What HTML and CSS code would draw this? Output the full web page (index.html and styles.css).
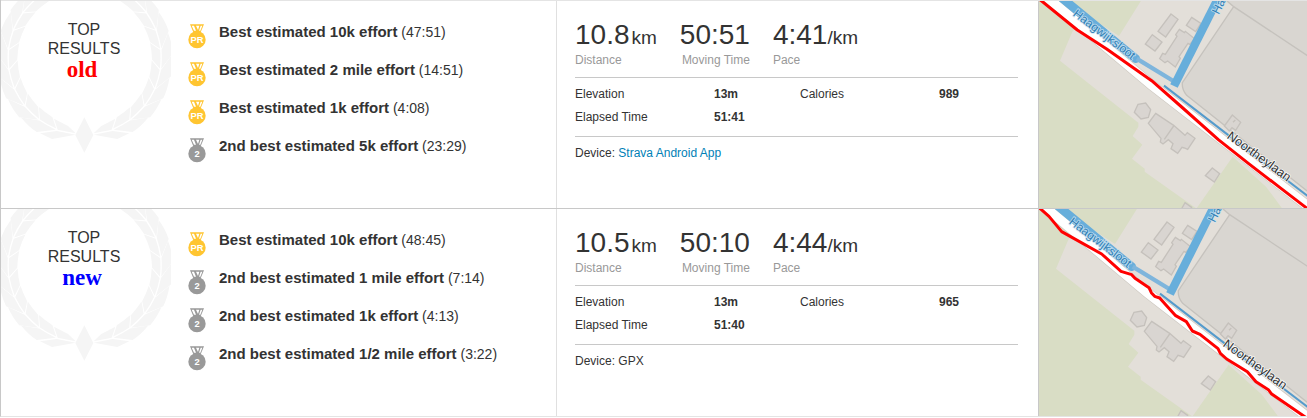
FILE: index.html
```
<!DOCTYPE html>
<html lang="en">
<head>
<meta charset="utf-8">
<title>Activity comparison</title>
<link rel="stylesheet" href="styles.css">
</head>
<body>
<svg class="sprites" aria-hidden="true">
  <defs>
    <path id="leaf" d="M232 0Q231 -28 225 -56L237 -110Q254 -80 260 -50ZM228 0Q227 -28 221 -55L188 -72Q196 -50 201 -23Z"/>
    <g id="branch">
      <use href="#leaf" transform="rotate(-52)"/>
      <use href="#leaf" transform="rotate(-37)"/>
      <use href="#leaf" transform="rotate(-22)"/>
      <use href="#leaf" transform="rotate(-7)"/>
      <use href="#leaf" transform="rotate(8)"/>
      <use href="#leaf" transform="rotate(23)"/>
      <use href="#leaf" transform="rotate(38)"/>
      <use href="#leaf" transform="rotate(53)"/>
      <use href="#leaf" transform="rotate(68)"/>
      <path d="M27 230L84 219L134 226L98 243ZM27 226L50 204L92 182L81 215Z"/>
    </g>
    <symbol id="wreath" viewBox="3 3 510 456">
      <g fill="#f5f5f5">
        <use href="#branch" transform="translate(254 174)"/>
        <use href="#branch" transform="translate(254 174) scale(-1 1)"/>
        <path d="M253 352L280 405L253 458L226 405Z"/>
      </g>
    </symbol>
    <symbol id="medal" viewBox="24 71 54 75">
      <path fill="currentColor" d="M30 72H72L61 98H41Z"/>
      <circle cx="51" cy="118" r="26" fill="currentColor"/>
      <path fill="#fff" d="M35 76h7l6 15h-6zM48 76h10l-4 13zM62 76h5l-6 15h-4z"/>
    </symbol>
    <g id="terrain">
      <rect x="-20" y="-20" width="900" height="680" fill="#e3dfd9"/>
      <path fill="#d9ddc5" d="M-20 -20H332L252 108L155 45L112 95L75 182L310 368V380L293 408L322 434L291 476L329 506V515L485 626H-20ZM593 470L693 560L742 626H484Z"/>
      <path fill="#d9d6d1" stroke="#c5c2bd" stroke-width="4" d="M575 2L596 20L442 248Q440 268 455 286L840 592V-10H580ZM596 20L840 182"/>
      <g fill="#d9d5d1" stroke="#c5c1bc" stroke-width="4">
        <path d="M408 42L429 58L392 111L369 94ZM470 52L498 70L482 95L454 76ZM352 104L381 126L360 153L331 132ZM433 88L448 98L451 94L480 117L464 133L459 130L432 170L436 175L421 201L398 183L390 188L374 176L383 160L391 163L426 109L422 104ZM309 313L332 309L347 329L340 352L318 357L298 337ZM362 340L416 376L450 406L457 398L480 415L458 448L448 444L441 442L428 460L408 446L414 431L400 419L384 432L376 426L378 415L340 370ZM416 378L388 418M592 345L617 367L602 391L591 383L583 393L568 378ZM594 367L601 360M532 504L554 521L538 546L511 527ZM450 608L470 622L465 640L440 626Z"/>
      </g>
      <path d="M10 -30L350 255L840 635" fill="none" stroke="#cfcac3" stroke-width="32"/>
      <path d="M10 -30L350 255L840 635" fill="none" stroke="#fff" stroke-width="28"/>
      <path d="M70 -15L302 176" fill="none" stroke="#67aedb" stroke-width="26" stroke-linecap="round"/>
      <path d="M305 176L420 246" fill="none" stroke="#7eb5dc" stroke-width="13"/>
      <path d="M562 -30L417 258" fill="none" stroke="#67aedb" stroke-width="25"/>
      <path d="M387 257L578 404L840 605" fill="none" stroke="#559bcc" stroke-width="6"/>
      <g class="map-label map-label-water">
        <text transform="translate(112 46) rotate(37)">Haagwijksloot</text>
        <text transform="translate(551 45) rotate(-63)">Haagwijksloot</text>
      </g>
      <text class="map-label" transform="translate(574 413) rotate(36)">Noortheylaan</text>
    </g>
  </defs>
</svg>

<main class="activities">
  <section class="activity">
    <div class="results">
      <div class="award">
        <svg class="wreath" aria-hidden="true"><use href="#wreath"/></svg>
        <h2 class="award-title">Top<br>Results<span class="tag tag-old">old</span></h2>
      </div>
      <ul class="efforts">
        <li><svg class="medal gold" viewBox="0 0 54 75"><use href="#medal" width="54" height="75"/><text x="27" y="57">PR</text></svg><span><strong>Best estimated 10k effort</strong> (47:51)</span></li>
        <li><svg class="medal gold" viewBox="0 0 54 75"><use href="#medal" width="54" height="75"/><text x="27" y="57">PR</text></svg><span><strong>Best estimated 2 mile effort</strong> (14:51)</span></li>
        <li><svg class="medal gold" viewBox="0 0 54 75"><use href="#medal" width="54" height="75"/><text x="27" y="57">PR</text></svg><span><strong>Best estimated 1k effort</strong> (4:08)</span></li>
        <li><svg class="medal silver" viewBox="0 0 54 75"><use href="#medal" width="54" height="75"/><text x="27" y="57">2</text></svg><span><strong>2nd best estimated 5k effort</strong> (23:29)</span></li>
      </ul>
    </div>
    <div class="stats">
      <dl class="totals">
        <div><dd>10.8<small class="unit-gap">km</small></dd><dt>Distance</dt></div>
        <div class="moving"><dd>50:51</dd><dt>Moving Time</dt></div>
        <div><dd>4:41<small>/km</small></dd><dt>Pace</dt></div>
      </dl>
      <table class="details">
        <tr><th scope="row">Elevation</th><td>13m</td><th scope="row">Calories</th><td>989</td></tr>
        <tr><th scope="row">Elapsed Time</th><td>51:41</td><td></td><td></td></tr>
      </table>
      <p class="device">Device: <a href="#">Strava Android App</a></p>
    </div>
    <div class="map">
      <svg viewBox="12 3 804 621" preserveAspectRatio="xMinYMin slice" role="img" aria-label="Route map">
        <use href="#terrain"/>
        <path class="route" d="M10 -5L127 90L215 147L350 242L440 321L550 419L640 490L735 563L820 628"/>
      </svg>
    </div>
  </section>

  <section class="activity">
    <div class="results">
      <div class="award">
        <svg class="wreath" aria-hidden="true"><use href="#wreath"/></svg>
        <h2 class="award-title">Top<br>Results<span class="tag tag-new">new</span></h2>
      </div>
      <ul class="efforts">
        <li><svg class="medal gold" viewBox="0 0 54 75"><use href="#medal" width="54" height="75"/><text x="27" y="57">PR</text></svg><span><strong>Best estimated 10k effort</strong> (48:45)</span></li>
        <li><svg class="medal silver" viewBox="0 0 54 75"><use href="#medal" width="54" height="75"/><text x="27" y="57">2</text></svg><span><strong>2nd best estimated 1 mile effort</strong> (7:14)</span></li>
        <li><svg class="medal silver" viewBox="0 0 54 75"><use href="#medal" width="54" height="75"/><text x="27" y="57">2</text></svg><span><strong>2nd best estimated 1k effort</strong> (4:13)</span></li>
        <li><svg class="medal silver" viewBox="0 0 54 75"><use href="#medal" width="54" height="75"/><text x="27" y="57">2</text></svg><span><strong>2nd best estimated 1/2 mile effort</strong> (3:22)</span></li>
      </ul>
    </div>
    <div class="stats">
      <dl class="totals">
        <div><dd>10.5<small class="unit-gap">km</small></dd><dt>Distance</dt></div>
        <div class="moving"><dd>50:10</dd><dt>Moving Time</dt></div>
        <div><dd>4:44<small>/km</small></dd><dt>Pace</dt></div>
      </dl>
      <table class="details">
        <tr><th scope="row">Elevation</th><td>13m</td><th scope="row">Calories</th><td>965</td></tr>
        <tr><th scope="row">Elapsed Time</th><td>51:40</td><td></td><td></td></tr>
      </table>
      <p class="device">Device: GPX</p>
    </div>
    <div class="map">
      <svg viewBox="12 3 804 621" preserveAspectRatio="xMinYMin slice" role="img" aria-label="Route map">
        <use href="#terrain" x="-12"/>
        <path class="route" d="M8 -5L42 25L80 71L200 138L258 190L290 200L300 211L342 239L349 254L359 265L374 270L422 323L454 341L472 369L495 379L549 422L556 436L575 453L637 491L663 521L700 545L709 557L815 630"/>
      </svg>
    </div>
  </section>
</main>
</body>
</html>
```
FILE: styles.css
```
* {
  box-sizing: border-box;
}

body {
  margin: 0;
  background: #fff;
  color: #333;
  font-family: "Liberation Sans", Arial, sans-serif;
  font-size: 12px;
}

h2, ul, dl, dd, p {
  margin: 0;
  padding: 0;
}

.sprites {
  position: absolute;
  width: 0;
  height: 0;
}

.activities {
  border-left: 1px solid #c8c8c8;
  border-bottom: 1px solid #e4e4e4;
}

.activity {
  display: grid;
  grid-template-columns: minmax(0, 555fr) minmax(0, 482fr) minmax(0, 269fr);
  border-top: 1px solid #e4e4e4;
}

.activity + .activity {
  border-top-color: #c8c8c8;
}

.results {
  display: flex;
  gap: 17px;
}

.award {
  display: grid;
  flex: none;
  align-items: start;
}

.wreath {
  grid-area: 1 / 1;
  width: 170px;
  height: 152px;
}

.award-title {
  grid-area: 1 / 1;
  padding: 19px 4px 0 0;
  text-align: center;
  text-transform: uppercase;
  font-size: 16px;
  font-weight: 400;
  line-height: 19px;
}

.tag {
  display: block;
  padding-right: 4px;
  text-transform: none;
  font-family: "Liberation Serif", serif;
  font-size: 23px;
  font-weight: 700;
  line-height: 24px;
}

.tag-old {
  color: #f00;
}

.tag-new {
  color: #00f;
}

.efforts {
  list-style: none;
  padding: 23px 0 32px;
  font-size: 14px;
  line-height: 16px;
}

.efforts li {
  display: flex;
  align-items: flex-start;
  gap: 13px;
  height: 38px;
}

.efforts strong {
  font-size: 15px;
}

.medal {
  flex: none;
  width: 18px;
  height: 25px;
}

.medal text {
  fill: #fff;
  font-size: 28px;
  font-weight: 700;
  text-anchor: middle;
}

.gold {
  color: #ffc531;
}

.silver {
  color: #999;
}

.stats {
  border-left: 1px solid #e0e0e0;
  padding: 17px 20px 0 18px;
}

.totals {
  display: flex;
  gap: 23px;
}

.totals > div {
  display: flex;
  flex-direction: column;
}

.totals dd {
  font-size: 28px;
  line-height: 34px;
}

.totals small {
  font-size: 19px;
  line-height: 1;
}

.totals .unit-gap {
  padding-left: 2px;
}

.totals dt {
  color: #999;
  line-height: 16px;
}

.totals .moving {
  text-align: right;
}

.details {
  width: 100%;
  margin-top: 9px;
  border-top: 1px solid #c8c8c8;
  border-bottom: 1px solid #c8c8c8;
  border-spacing: 0;
  padding: 4px 0 8px;
  table-layout: fixed;
}

.details th,
.details td {
  padding: 0;
  height: 23px;
  text-align: left;
}

.details th {
  width: 139px;
  font-weight: 400;
}

.details td {
  width: 86px;
  font-weight: 700;
}

.details td:last-child {
  width: auto;
}

.device {
  padding-top: 8px;
  line-height: 16px;
}

.device a {
  color: #007fb6;
  text-decoration: none;
}

.map {
  overflow: hidden;
  border-left: 1px solid #c8c8c8;
}

.map svg {
  display: block;
  width: 100%;
  height: 100%;
}

.map-label {
  fill: #333;
  stroke: #fff;
  stroke-width: 5px;
  stroke-opacity: 0.8;
  paint-order: stroke;
  font-size: 38px;
}

.map-label-water {
  fill: #2f7fb5;
  stroke: #cfe5f3;
  font-size: 36px;
}

.route {
  fill: none;
  stroke: #f00;
  stroke-width: 9px;
  stroke-linejoin: round;
}
```
